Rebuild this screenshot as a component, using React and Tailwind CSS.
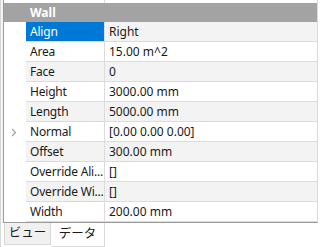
import React from 'react';

const rows = [
    { name: 'Align', value: 'Right', selected: true },
    { name: 'Area', value: '15.00 m^2' },
    { name: 'Face', value: '0' },
    { name: 'Height', value: '3000.00 mm' },
    { name: 'Length', value: '5000.00 mm' },
    { name: 'Normal', value: '[0.00 0.00 0.00]', expandable: true },
    { name: 'Offset', value: '300.00 mm' },
    { name: 'Override Ali...', value: '[]' },
    { name: 'Override Wi...', value: '[]' },
    { name: 'Width', value: '200.00 mm' },
];

const App = () => {
    return (
        <div className="w-[321px] h-[247px] bg-white overflow-hidden flex flex-col text-[12px] text-[#1a1a1a]" style={{ fontFamily: '"Noto Sans", "Noto Sans CJK JP", sans-serif' }}>
            {/* Property grid */}
            <div className="h-[223px] flex border-l border-[#d8d8d8]">
                <div className="w-[2px] bg-[#f4f4f4]" />
                <div className="flex-1 flex flex-col border-l border-b border-[#9a9a9a] border-r border-r-[#dcdcdc] mr-[3px]">
                    {/* partially scrolled row */}
                    <div className="h-[3px] flex">
                        <div className="w-[22px]" />
                        <div className="w-[79px] border-r border-[#dcdcdc]" />
                    </div>
                    {/* Category header */}
                    <div className="h-[19px] bg-[#a3a3a3] text-white font-bold flex items-center pl-[26px] leading-none">
                        Wall
                    </div>
                    {rows.map((row, idx) => (
                        <div key={row.name} className="h-[20px] flex">
                            <div className="w-[22px] flex items-center justify-center">
                                {row.expandable && (
                                    <svg width="6" height="9" viewBox="0 0 6 9" fill="none" stroke="#a0a0a0" strokeWidth="1.2" className="ml-[-2px]">
                                        <path d="M1 1l3.5 3.5L1 8" />
                                    </svg>
                                )}
                            </div>
                            <div className={`flex-1 flex border-b border-[#dcdcdc] ${idx % 2 === 0 ? 'bg-[#f3f3f3]' : 'bg-white'}`}>
                                <div className={`w-[79px] shrink-0 border-r border-[#dcdcdc] flex items-center pl-[4px] whitespace-nowrap overflow-hidden tracking-[-0.2px] ${row.selected ? 'bg-[#0078d7] text-white' : ''}`}>
                                    {row.name}
                                </div>
                                <div className="flex-1 flex items-center pl-[4px] whitespace-nowrap">
                                    {row.value}
                                </div>
                            </div>
                        </div>
                    ))}
                </div>
            </div>

            {/* Tabs */}
            <div className="flex-1 flex pl-[3px] border-l border-[#d8d8d8]">
                <div className="w-[47px] h-[22px] bg-[#f0f0f0] border border-t-0 border-[#d9d9d9] flex items-center justify-center text-[12.5px]">
                    ビュー
                </div>
                <div className="w-[54px] h-[24px] bg-white border border-t-0 border-l-0 border-[#d9d9d9] flex items-center justify-center text-[12.5px]">
                    データ
                </div>
            </div>
        </div>
    );
};

export default App;
